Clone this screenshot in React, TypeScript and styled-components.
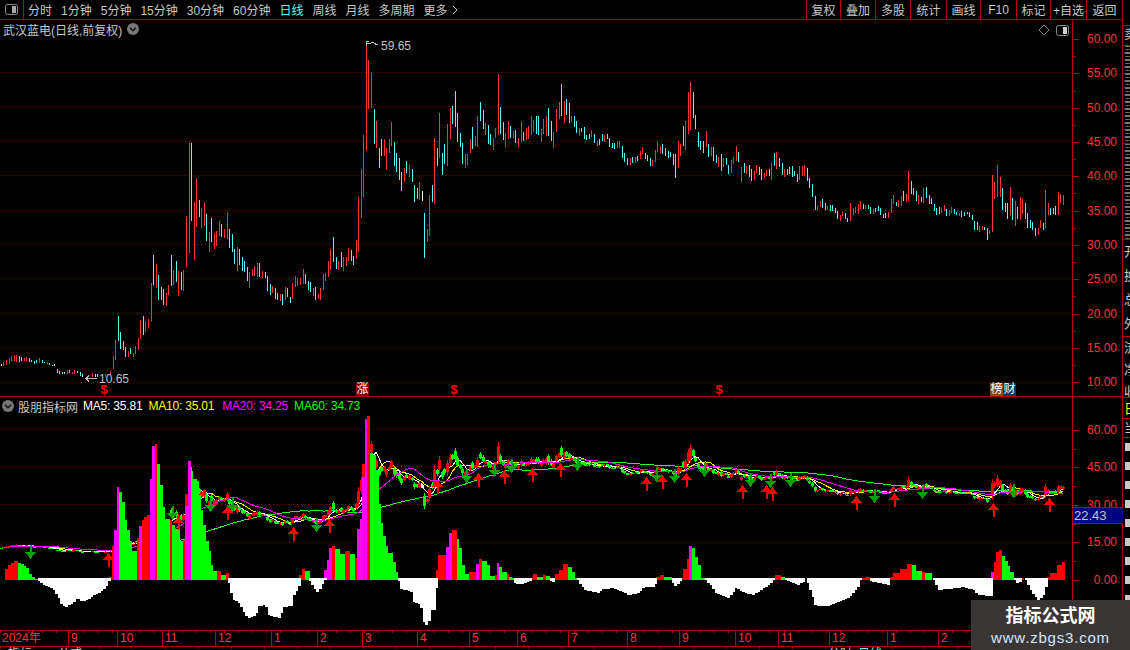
import React from "react";
import styled, { createGlobalStyle } from "styled-components";

const RED_LINE = "#b40000";
const AXIS_RED = "#ff3232";
const FONT = '"Liberation Sans", "Noto Sans CJK SC", sans-serif';

const Global = createGlobalStyle`
  html, body { margin: 0; padding: 0; background: #000; overflow: hidden; }
  * { box-sizing: border-box; }
`;

const Page = styled.div`
  position: relative;
  width: 1130px;
  height: 650px;
  overflow: hidden;
  background: #000;
  color: #c8c8c8;
  font: 12px ${FONT};
  display: flex;
  flex-direction: column;
`;

/* ---------- toolbar ---------- */
const Toolbar = styled.div`
  flex: 0 0 20px;
  width: 1123px;
  height: 20px;
  display: flex;
  align-items: stretch;
  border-bottom: 1px solid ${RED_LINE};
  border-right: 1px solid ${RED_LINE};
`;
const ToggleCell = styled.div`
  flex: 0 0 24px;
  display: flex;
  align-items: center;
  justify-content: center;
  border-right: 1px solid ${RED_LINE};
`;
const PeriodList = styled.div`
  flex: 1;
  display: flex;
  align-items: center;
  gap: 9px;
  padding-left: 4px;
`;
const PeriodItem = styled.span<{ $active?: boolean }>`
  color: ${(p) => (p.$active ? "#54ffff" : "#c8c8c8")};
  white-space: nowrap;
  display: inline-flex;
  align-items: center;
  gap: 4px;
`;
const ToolButtons = styled.div`
  display: flex;
`;
const ToolButton = styled.div<{ $wide?: number }>`
  width: ${(p) => p.$wide ?? 35}px;
  display: flex;
  align-items: center;
  justify-content: center;
  border-left: 1px solid ${RED_LINE};
  color: #c8c8c8;
  white-space: nowrap;
`;

/* ---------- body ---------- */
const Body = styled.div`
  flex: 1;
  display: flex;
  min-height: 0;
`;
const ChartStack = styled.div`
  flex: 0 0 1123px;
  display: flex;
  flex-direction: column;
  min-height: 0;
`;
const Pane = styled.div<{ $h: number; $top?: boolean }>`
  position: relative;
  flex: 0 0 ${(p) => p.$h}px;
  min-height: 0;
  height: ${(p) => p.$h}px;
  display: flex;
  border-top: ${(p) => (p.$top ? `1px solid ${RED_LINE}` : "none")};
`;
const Canvas = styled.svg`
  flex: 0 0 1072px;
  display: block;
  shape-rendering: crispEdges;
`;
const PriceAxis = styled.div<{ $pad: number }>`
  flex: 1;
  min-height: 0;
  border-left: 1px solid ${RED_LINE};
  border-right: 1px solid ${RED_LINE};
  padding-top: ${(p) => p.$pad}px;
  display: flex;
  flex-direction: column;
  overflow: hidden;
`;
const AxisRow = styled.div<{ $h: number; $minor?: boolean }>`
  position: relative;
  flex: 0 0 ${(p) => p.$h}px;
  display: flex;
  align-items: center;
  justify-content: flex-end;
  padding-right: 5px;
  color: ${AXIS_RED};
  &::before {
    content: "";
    position: absolute;
    left: 0;
    top: 50%;
    width: 6px;
    height: 1px;
    background: ${RED_LINE};
  }
  &::after {
    content: "";
    display: ${(p) => (p.$minor ? "block" : "none")};
    position: absolute;
    left: 0;
    top: 100%;
    width: 3px;
    height: 1px;
    background: ${RED_LINE};
  }
`;
const PaneTitle = styled.div`
  position: absolute;
  left: 3px;
  top: 1px;
  height: 16px;
  display: flex;
  align-items: center;
  gap: 5px;
  color: #c8c8c8;
`;
const CornerIcons = styled.div`
  position: absolute;
  left: 1038px;
  top: 4px;
  display: flex;
  align-items: center;
  gap: 6px;
`;
const Legend = styled.div`
  position: absolute;
  left: 2px;
  top: 1px;
  height: 16px;
  display: flex;
  align-items: center;
`;
const LegendName = styled.span`
  margin: 0 5px 0 4px;
  color: #c8c8c8;
`;
const LegendValue = styled.span<{ $color: string; $gap: number }>`
  color: ${(p) => p.$color};
  margin-right: ${(p) => p.$gap}px;
  white-space: nowrap;
  letter-spacing: -0.2px;
`;
const Badge = styled.span<{ $x: number; $bg: string }>`
  position: absolute;
  left: ${(p) => p.$x}px;
  top: 363px;
  width: 13px;
  height: 13px;
  background: ${(p) => p.$bg};
  color: #fff;
  font-size: 12px;
  line-height: 13px;
  text-align: center;
`;
const PriceTag = styled.div`
  position: absolute;
  left: 1073px;
  top: 110px;
  width: 50px;
  height: 17px;
  padding-left: 1px;
  background: #000080;
  border-top: 1px solid ${RED_LINE};
  border-bottom: 1px solid ${RED_LINE};
  color: #c8c8c8;
  font-size: 13px;
  line-height: 15px;
`;

/* ---------- time axis ---------- */
const TimeAxis = styled.div`
  flex: 0 0 16px;
  display: flex;
  border-top: 1px solid ${RED_LINE};
  border-bottom: 1px solid ${RED_LINE};
  background: repeating-linear-gradient(90deg, ${RED_LINE} 0 1px, transparent 1px 14px) top left / 100% 2px no-repeat;
`;
const TimeCell = styled.div<{ $w: number }>`
  flex: 0 0 ${(p) => p.$w}px;
  border-left: 1px solid ${RED_LINE};
  padding-left: 2px;
  color: ${AXIS_RED};
  line-height: 15px;
  white-space: nowrap;
  &:first-child { border-left: none; padding-left: 2px; }
`;
const TabStrip = styled.div`
  flex: 1;
  min-height: 0;
  overflow: hidden;
  display: flex;
  gap: 6px;
  padding-left: 8px;
  font-size: 12px;
  line-height: 14px;
  background: repeating-linear-gradient(90deg, ${RED_LINE} 0 1px, transparent 1px 33px) top left / 100% 2px no-repeat;
`;
const TabText = styled.span<{ $left?: number; $cyan?: boolean }>`
  margin-left: ${(p) => p.$left ?? 0}px;
  color: ${(p) => (p.$cyan ? "#54ffff" : "#c8c8c8")};
`;

/* ---------- clipped side panel ---------- */
const SidePanel = styled.div`
  flex: 1;
  overflow: hidden;
  padding-top: 5px;
  display: flex;
  flex-direction: column;
`;
const SideSection = styled.div<{ $h: number; $line: number; $size: number; $color?: string }>`
  flex: 0 0 ${(p) => p.$h}px;
  overflow: hidden;
  border-top: 1px solid ${RED_LINE};
  padding-left: 1px;
  color: ${(p) => p.$color ?? "#c8c8c8"};
  font-size: ${(p) => p.$size}px;
  line-height: ${(p) => p.$line}px;
  white-space: nowrap;
`;
const SideBlocks = styled.div`
  display: flex;
  flex-direction: column;
  gap: 11px;
  padding: 5px 0 0 1px;
`;
const SideBlock = styled.div`
  width: 5px;
  height: 8px;
  background: #c8c8c8;
`;
const SideLine = styled.div``;

/* ---------- watermark ---------- */
const Watermark = styled.div`
  position: absolute;
  right: 0;
  bottom: 0;
  width: 159px;
  height: 50px;
  background: #3b3636;
  display: flex;
  flex-direction: column;
  align-items: center;
  padding-top: 5px;
`;
const WatermarkTitle = styled.div`
  color: #fff;
  font-size: 18px;
  font-weight: 700;
  line-height: 22px;
`;
const WatermarkUrl = styled.div`
  color: #d6e6f8;
  font-size: 15px;
  line-height: 20px;
  letter-spacing: 0.8px;
  margin-top: 1px;
`;

/* ---------- data ---------- */
type Bar = { x: number; t: number; b: number; c: string };
const seg = (ox: number, oy: number, s: string): Bar[] =>
  s
    .split(";")
    .map((i) => i.trim())
    .filter(Boolean)
    .map((i) => {
      const [z, t, b, c] = i.split(" ");
      return { x: Math.floor(ox + +z / 3), t: oy + +t / 3, b: oy + +b / 3, c };
    });

const bars: Bar[] = [
  ...seg(0, 130, `4 702 708 c;11 697 707 r;18 690 705 r;27 684 702 r;33 679 692 r;42 676 692 r;48 675 695 r;57 678 695 c;63 680 694 c;72 684 692 r;78 681 693 r;87 684 696 c;93 690 697 c;102 692 702 c;108 690 700 c;117 684 699 r;126 690 700 c;132 695 700 c;141 696 703 r;147 699 705 c;156 704 708 c;162 702 708 w;171 717 729 c;177 722 732 c;186 725 732 c;192 726 732 c;201 720 732 r;207 720 730 c;216 725 732 r;222 720 732 r;231 722 730 c;240 727 738 c;246 732 741 c;276 729 741 r;286 732 740 c;291 732 742 c;315 733 741 r;330 722 735 r;339 678 717 r;346 630 690 r;354 558 632 c;360 606 658 c;369 633 660 c;375 651 681 c;384 663 681 r;390 654 672 c;399 669 681 r;405 648 672 r;414 624 660 r;420 570 627 r;430 558 615 c;435 573 606 r;444 567 594 r;453 459 573 r;459 375 465 c;468 402 474 r;474 435 510 c;483 471 510 c;489 477 525 c;498 489 528 r;504 465 495 r;513 375 468 c;519 420 465 r;528 393 456 c;534 423 498 r;543 426 480 c;549 420 483 r;558 258 411 r;567 39 369 r;573 39 273 c;582 216 390 r;588 144 291 r;597 210 261 c;603 234 294 r;612 216 288 r;618 252 333 c;627 306 366 r;633 264 336 c;642 309 357 r;648 303 348 r;657 273 318 r;663 282 321 c;672 297 324 r;682 246 327 r;687 297 354 c;696 312 366 c;702 357 402 c;711 351 423 r;717 357 405 c;726 381 423 c;732 393 426 c;741 411 453 c;747 426 474 r;756 417 438 r;762 408 438 r;771 399 441 r;777 399 441 c;786 423 444 r;795 426 444 c;801 438 483 c;810 462 495 c;816 468 489 r;825 474 507 c;831 489 510 c;840 492 513 r;846 492 525 c;855 471 510 r;861 474 501 c;870 501 519 c;876 459 507 r;885 438 471 r;891 444 468 r;900 444 465 r;909 417 462 r;915 432 462 c;924 453 480 c;930 456 486 c;939 474 498 r;945 471 510 c;954 492 507 r;960 474 510 r;969 432 480 r;975 429 453 r;984 393 441 r;990 357 420 r;999 321 396 c;1008 381 417 c;1014 393 420 r;1023 366 411 c;1029 381 423 r;1038 381 408 r;1044 354 393 r;1053 360 393 c;1059 378 405 c;1068 330 387 r;1075 201 366 r;1083 117 264 r;1090 15 201 r`),
  ...seg(340, 30, `78 40 363 r;84 90 237 r;93 126 234 r;102 237 342 c;108 273 354 r;117 354 414 c;123 327 378 c;132 327 378 r;138 354 420 r;147 327 369 r;153 276 348 r;162 336 408 c;168 369 426 c;177 384 450 c;183 426 483 c;192 414 456 r;198 393 429 c;207 405 441 r;216 417 456 c;222 465 516 c;231 474 507 c;237 456 510 r;246 483 513 w;252 549 684 c;261 597 636 r;267 495 618 r;276 465 516 c;282 324 522 r;291 354 408 c;297 249 384 r;306 369 435 c;312 342 402 c;321 282 408 r;330 234 327 r;336 228 282 c;345 183 291 c;351 249 336 c;360 309 351 c;366 339 402 c;375 372 414 r;381 372 405 r;390 327 369 r;396 291 357 c;405 318 348 r;411 258 351 r;420 216 273 c;429 240 297 c;435 279 315 r;444 285 342 c;450 312 345 c;459 324 360 r;465 294 324 r;474 132 315 r;480 231 312 c;489 276 330 c;495 309 351 r;504 273 327 r;510 288 324 c;519 303 324 r;525 300 339 c;534 324 351 r;543 273 336 r;549 306 333 c;558 294 330 r;564 288 327 r;573 258 315 r;579 270 306 r;588 258 312 c;594 258 315 c;603 297 336 r;609 267 312 r;618 258 318 r;624 234 318 c;633 273 333 c;639 306 354 r;648 237 306 r;657 216 267 r;663 162 258 c;672 213 279 r;678 207 255 c;687 219 279 c;693 258 276 r;702 258 291 c;708 273 309 c;717 294 318 r;723 294 306 c;732 291 327 c;738 315 330 c;747 312 327 c;753 300 321 r;762 312 339 c;771 333 348 r;777 327 345 c;786 312 333 c;792 315 336 r;801 312 327 c;807 324 351 c;816 339 354 c;822 339 357 c;831 333 354 r;837 333 354 r;846 348 384 c;852 369 396 c;861 384 405 c;870 384 405 r;876 381 399 c;885 381 399 r;891 378 393 c;900 363 387 r;906 351 372 r;915 369 387 c;921 375 393 c;930 384 408 c;936 390 408 r;945 360 396 r;951 333 366 r;960 348 369 r;966 342 372 c;975 354 378 c;984 363 384 c;990 366 381 c;999 372 405 c;1006 372 444 c;1014 333 414 r;1020 342 378 r;1029 288 348 c;1035 273 360 r;1044 186 312 r;1050 156 300 r;1059 186 264 c;1065 255 297 c;1075 306 351 c;1080 333 360 c;1089 333 369 c;1098 303 351 r;1104 342 381 c;1113 351 378 r;1119 351 393 c;1128 375 399 c;1134 381 411 r`),
  ...seg(700, 70, `63 252 303 c;69 264 291 r;78 264 285 c;84 285 312 c;93 270 309 r;99 261 282 r;108 228 273 r;114 246 276 c;123 291 336 r;132 279 309 c;138 288 312 r;147 285 321 c;153 297 333 c;162 303 330 r;168 285 309 r;177 291 315 c;183 297 330 c;192 309 324 r;198 300 318 r;207 297 318 c;213 279 330 r;222 249 288 c;228 246 297 r;237 264 291 c;246 279 315 c;252 297 321 r;261 297 315 c;267 291 312 c;276 288 321 c;282 303 318 c;291 312 336 c;297 288 330 r;306 288 318 r;312 285 318 r;321 294 333 c;327 324 354 c;336 342 381 c;345 378 420 c;351 408 420 r;360 393 411 r;366 387 414 c;375 399 420 c;381 408 420 r;390 405 423 c;396 405 423 c;405 414 429 c;411 423 447 c;420 435 453 r;426 423 438 r;435 429 447 c;441 444 456 c;450 399 453 r;459 414 435 r;465 411 429 r;474 402 432 r;480 393 417 r;489 402 417 c;495 405 417 r;504 405 417 c;510 411 432 c;519 417 432 r;525 414 426 c;534 408 423 c;540 414 435 c;549 432 444 c;555 429 444 c;564 426 444 r;573 387 429 r;579 375 402 r;588 396 408 c;594 390 411 r;603 378 408 r;609 363 393 c;618 372 396 r;624 303 393 r;633 333 372 c;639 354 375 c;648 363 393 c;654 375 402 r;663 381 396 c;669 354 399 r;678 351 384 c;687 375 402 c;693 384 402 c;702 402 423 c;708 414 435 c;717 411 432 c;723 414 429 r;732 405 423 r;738 417 438 c;747 420 438 r;753 411 429 r;762 417 432 c;768 426 435 c;777 429 438 r;783 423 441 c;792 426 438 c;801 426 432 c;807 426 441 c;816 435 450 c;822 453 480 c;831 456 480 c;837 468 486 r;846 468 480 r;852 471 480 c;861 474 510 c;867 480 492 r;876 315 486 r;882 336 387 r;891 285 381 r;900 321 381 r;906 354 420 c;915 399 426 c;921 399 447 c;930 351 438 r;936 384 450 c;945 393 468 r;951 411 447 c;960 381 450 r;966 387 432 r;975 399 447 c;981 429 474 c;990 450 474 c;996 456 480 c;1005 474 498 c;1014 474 495 r;1020 450 474 r;1029 459 480 c;1035 360 474 r;1044 399 435 r;1050 414 435 c;1059 414 432 c;1065 408 435 c;1074 366 435 r;1080 372 399 r;1089 375 405 r`),
];

const toPrice = (y: number) => 60 - (y - 38.3) / 6.86;
const lowY = (y: number) => 579 - 2.5 * toPrice(y);

const ma = (n: number) => {
  const pts: string[] = [];
  bars.forEach((b, i) => {
    if (i < n - 1 && n === 60) return;
    const from = Math.max(0, i - n + 1);
    let sum = 0;
    for (let k = from; k <= i; k++) {
      const r = bars[k];
      sum += r.c === "c" ? r.t * 0.4 + r.b * 0.6 : r.t * 0.6 + r.b * 0.4;
    }
    pts.push(`${b.x},${lowY(sum / (i - from + 1)).toFixed(1)}`);
  });
  return pts.join(" ");
};

const HIST_COLOR: Record<string, string> = { r: "#ff0000", g: "#00ff00", m: "#ff00ff" };
const hist = `5 8 569 r;8 11 565 r;11 14 563 r;14 18 561 r;18 21 563 g;21 24 564 g;24 26 566 g;26 29 568 g;29 32 574 g;32 35 577 g;35 38 579 g;
109 112 577 r;112 114 546 r;114 117 530 m;117 119 487 m;119 122 492 g;122 125 502 g;125 127 520 g;127 130 530 g;130 132 541 g;132 137 551 g;137 139 538 r;139 142 526 m;142 144 520 r;144 147 517 r;147 150 515 r;150 152 479 m;152 155 446 m;155 157 444 r;157 160 464 g;160 163 485 g;163 165 507 g;165 170 519 g;170 172 520 r;172 175 525 g;175 180 529 g;180 183 541 g;183 185 540 r;185 188 494 r;185 188 506 m;188 191 461 m;191 193 471 g;193 197 479 g;197 199 481 g;199 201 495 g;201 203 510 g;203 206 525 g;206 209 541 g;209 211 551 g;211 213 565 g;213 217 571 g;217 221 571 r;221 226 575 g;226 229 573 r;
299 302 575 r;302 305 569 r;305 310 571 g;324 327 570 m;327 329 560 m;329 332 548 m;332 335 546 r;335 340 549 g;340 345 554 g;345 350 551 r;350 355 554 g;355 357 558 r;357 360 529 m;360 362 519 m;362 365 464 r;362 365 477 m;365 368 419 m;367 370 416 r;370 373 453 g;373 376 455 g;376 379 470 g;379 381 504 g;381 383 523 g;383 386 536 g;386 388 546 g;388 393 553 g;393 396 562 g;396 398 572 g;
436 438 570 r;438 446 555 r;446 449 547 m;449 452 533 m;452 457 530 r;457 459 539 g;459 462 548 g;462 465 565 g;465 469 574 g;469 476 572 r;476 479 564 m;479 482 559 r;482 487 561 g;487 490 565 g;490 495 576 g;495 497 575 r;497 499 563 m;499 502 567 g;502 507 572 g;507 509 574 r;509 512 577 g;512 515 578 g;
530 533 578 r;533 537 574 r;537 543 577 g;543 546 575 r;546 550 576 g;555 559 574 r;559 563 570 r;563 568 564 r;568 572 567 g;572 575 572 g;575 577 578 g;
656 660 577 r;660 664 575 r;664 672 577 g;680 683 578 r;683 687 569 r;687 689 559 r;689 692 546 m;692 695 548 g;695 698 557 g;698 701 565 g;701 705 578 g;
775 781 575 r;781 785 577 g;860 865 578 r;865 870 577 r;890 893 577 r;893 900 573 r;900 907 569 r;907 912 564 r;912 916 565 g;916 922 571 g;922 925 572 r;925 932 573 g;
991 994 572 m;994 996 562 r;996 999 552 r;999 1002 550 r;1002 1005 556 g;1005 1008 561 g;1008 1010 566 g;1010 1014 572 g;1021 1024 578 r;1047 1050 577 r;1050 1057 573 r;1057 1062 565 r;1062 1065 562 r`
  .split(";")
  .map((s) => s.trim().split(" "))
  .map(([a, b, y, c]) => ({ x0: +a, x1: +b, y: +y, c }));

const whiteRuns: number[][] = [
  [38,581,43,585,47,587,52,589,57,596,60,603,62,606,65,607,68,605,72,603,76,598,81,601,87,600,92,595,98,593,104,588,107,583,109,579],
  [228,583,232,599,238,603,242,610,247,618,255,615,257,606,265,605,268,615,278,618,283,607,292,606,293,595,297,589,300,579],
  [309,581,313,588,317,593,322,583,325,579],
  [398,581,400,589,412,592,413,602,420,605,423,622,427,627,430,610,434,610,436,580],
  [514,583,518,584,525,583,530,580],
  [550,581,555,582],
  [577,580,580,585,585,590,597,593,602,589,613,588,622,592,628,595,638,593,643,587,652,587,657,580],
  [672,583,675,587,680,580],
  [705,580,710,585,715,593,728,598,735,588,743,592,752,595,760,590,770,583,773,579],
  [785,580,797,585,805,580],
  [807,583,815,606,827,606,848,598,857,587,860,579],
  [870,581,888,585,890,579],
  [933,580,938,590,963,587,973,590,977,595,991,596],
  [1014,580,1018,584,1021,579],
  [1025,580,1030,590,1037,600,1043,595,1047,579],
];
const whiteRects = whiteRuns.flatMap((run) => {
  const out: { x: number; w: number; y: number }[] = [];
  const pts: number[][] = [];
  for (let i = 0; i < run.length; i += 2) pts.push([run[i], run[i + 1]]);
  let k = 0;
  for (let x = pts[0][0]; x < pts[pts.length - 1][0]; x += 2.5) {
    while (k < pts.length - 2 && x >= pts[k + 1][0]) k++;
    const [x0, y0] = pts[k];
    const [x1, y1] = pts[k + 1];
    out.push({ x: Math.floor(x), w: 3, y: Math.round(y0 + ((y1 - y0) * (x - x0)) / (x1 - x0)) });
  }
  return out;
});

const upArrows = [[108,553],[178,516],[227,506],[293,527],[329,519],[437,480],[478,473],[504,470],[532,468],[560,463],[646,477],[662,475],[686,473],[742,485],[766,485],[772,487],[856,496],[894,493],[993,503],[1049,498]];
const downArrows = [[30,559],[172,520],[210,512],[232,512],[316,532],[466,483],[494,477],[511,473],[577,471],[656,482],[674,483],[704,477],[750,487],[770,488],[790,487],[874,503],[922,499],[1013,498]];

const upperPrices = ["60.00","55.00","50.00","45.00","40.00","35.00","30.00","25.00","20.00","15.00","10.00"];
const lowerPrices = ["60.00","45.00","30.00","15.00","0.00"];
const periods = ["分时","1分钟","5分钟","15分钟","30分钟","60分钟","日线","周线","月线","多周期"];
const tools: [string, number?][] = [["复权",34],["叠加"],["多股"],["统计",36],["画线",34],["F10",36],["标记",34],["+自选",36],["返回",36]];
const months: [string, number][] = [["2024年",68],["9",117],["10",162],["11",215],["12",271],["1",317],["2",362],["3",417],["4",469],["5",517],["6",568],["7",627],["8",679],["9",735],["10",778],["11",829],["12",887],["1",938],["2",1123]];

/* ---------- icons ---------- */
const Toggle = ({ light }: { light?: boolean }) => (
  <svg width="13" height="11" viewBox="0 0 13 11">
    <rect x="0.5" y="0.5" width="12" height="10" rx="2" fill="#000" stroke="#8a8a8a" />
    <rect x="7" y="2" width="4" height="7" fill={light ? "#d0d0d0" : "#a8a8a8"} />
  </svg>
);
const Round = () => (
  <svg width="12" height="12" viewBox="0 0 12 12">
    <circle cx="6" cy="6" r="6" fill="#777" />
    <path d="M3 4.8 6 7.8 9 4.8" fill="none" stroke="#111" strokeWidth="1.4" />
  </svg>
);

const Dots = ({ ys }: { ys: number[] }) => (
  <>
    {ys.map((y) => (
      <line key={y} x1="1" x2="1072" y1={y + 0.5} y2={y + 0.5} stroke="#a80000" strokeDasharray="1 3" />
    ))}
  </>
);

export default function App() {
  return (
    <Page>
      <Global />
      <Toolbar>
        <ToggleCell>
          <Toggle />
        </ToggleCell>
        <PeriodList>
          {periods.map((p) => (
            <PeriodItem key={p} $active={p === "日线"}>
              {p}
            </PeriodItem>
          ))}
          <PeriodItem>
            更多
            <svg width="6" height="10" viewBox="0 0 6 10">
              <path d="M1 1 5 5 1 9" fill="none" stroke="#c8c8c8" />
            </svg>
          </PeriodItem>
        </PeriodList>
        <ToolButtons>
          {tools.map(([t, w]) => (
            <ToolButton key={t} $wide={w}>
              {t}
            </ToolButton>
          ))}
        </ToolButtons>
      </Toolbar>

      <Body>
        <ChartStack>
          <Pane $h={376}>
            <Canvas width="1072" height="376" viewBox="0 20 1072 376">
              <Dots ys={[72, 106, 141, 175, 210, 244, 278, 313, 347, 382]} />
              {bars.map((b, i) => (
                <rect
                  key={i}
                  x={b.x}
                  y={b.t}
                  width="1"
                  height={b.b - b.t}
                  fill={b.c === "r" ? "#ff3232" : b.c === "w" ? "#ffffff" : "#54fcfc"}
                />
              ))}
              <g fill="none" stroke="#c0c0c0">
                <path d="M369 41.5H366.5V46M367 43.5H370L373 42L376 44.5H378" />
                <path d="M97 378.5H86M89 375.5L86 378.5L89 381.5" />
              </g>
              <text x="381" y="50" fill="#c0c0c0" fontFamily="Liberation Sans" fontSize="12">59.65</text>
              <text x="99" y="383" fill="#c0c0c0" fontFamily="Liberation Sans" fontSize="12">10.65</text>
              {[104, 454, 719].map((x) => (
                <text key={x} x={x} y="394" textAnchor="middle" fill="#ff0000" fontFamily="Liberation Sans" fontWeight="700" fontSize="13">
                  $
                </text>
              ))}
            </Canvas>
            <PriceAxis $pad={2}>
              {upperPrices.map((p, i) => (
                <AxisRow key={p} $h={34.3} $minor={i < 10}>
                  {p}
                </AxisRow>
              ))}
            </PriceAxis>
            <PaneTitle>
              武汉蓝电(日线,前复权)
              <Round />
            </PaneTitle>
            <CornerIcons>
              <svg width="12" height="12" viewBox="0 0 12 12">
                <path d="M6 1 11 6 6 11 1 6Z" fill="none" stroke="#808080" />
              </svg>
              <Toggle light />
            </CornerIcons>
            <Badge $x={356} $bg="#8a0000">涨</Badge>
            <Badge $x={990} $bg="#8a4a00">榜</Badge>
            <Badge $x={1003} $bg="#003a70">财</Badge>
          </Pane>

          <Pane $h={234} $top>
            <Canvas width="1072" height="233" viewBox="0 397 1072 233">
              <Dots ys={[429, 466, 504, 542]} />
              <polyline points={ma(60)} fill="none" stroke="#22ff22" />
              <polyline points={ma(10)} fill="none" stroke="#ffff00" />
              <polyline points={ma(5)} fill="none" stroke="#ffffff" />
              {bars.map((b, i) => {
                const t = lowY(b.t);
                const h = Math.max(1, lowY(b.b) - t);
                const fill = b.c === "r" ? "#ff0000" : b.c === "w" ? "#ffffff" : "#00ff00";
                return (
                  <g key={i} fill={fill}>
                    <rect x={b.x} y={t} width="1" height={h} />
                    <rect x={b.x - 1} y={t + h * 0.2} width="3" height={Math.max(1, h * 0.6)} />
                  </g>
                );
              })}
              <polyline points={ma(20)} fill="none" stroke="#ff00ff" />
              {hist.map((h, i) => (
                <rect key={i} x={h.x0} y={h.y} width={h.x1 - h.x0} height={580 - h.y} fill={HIST_COLOR[h.c]} />
              ))}
              {whiteRects.map((r, i) => (
                <rect key={i} x={r.x} y={578} width={r.w} height={Math.max(1, r.y - 578)} fill="#ffffff" />
              ))}
              {upArrows.map(([x, y]) => (
                <g key={`${x}u`} fill="#ff0000">
                  <path d={`M${x + 0.5} ${y}L${x + 6} ${y + 7}H${x - 5}Z`} />
                  <rect x={x - 0.5} y={y + 7} width="2" height="7" />
                </g>
              ))}
              {downArrows.map(([x, y]) => (
                <g key={`${x}d`} fill="#00a000">
                  <path d={`M${x + 0.5} ${y}L${x + 6} ${y - 7}H${x - 5}Z`} />
                  <rect x={x - 0.5} y={y - 14} width="2" height="7" />
                </g>
              ))}
            </Canvas>
            <PriceAxis $pad={14}>
              {lowerPrices.map((p, i) => (
                <AxisRow key={p} $h={37.5} $minor={i < 4}>
                  {p}
                </AxisRow>
              ))}
            </PriceAxis>
            <Legend>
              <Round />
              <LegendName>股朋指标网</LegendName>
              <LegendValue $color="#ffffff" $gap={6}>MA5: 35.81</LegendValue>
              <LegendValue $color="#ffff00" $gap={8}>MA10: 35.01</LegendValue>
              <LegendValue $color="#ff00ff" $gap={6}>MA20: 34.25</LegendValue>
              <LegendValue $color="#00ff00" $gap={6}>MA60: 34.73</LegendValue>
            </Legend>
            <PriceTag>22.43</PriceTag>
          </Pane>

          <TimeAxis>
            {months.map(([m, end], i) => (
              <TimeCell key={i} $w={end - (i ? months[i - 1][1] : 0)}>
                {m}
              </TimeCell>
            ))}
          </TimeAxis>
          <TabStrip>
            <TabText>指标</TabText>
            <TabText $left={20}>公式</TabText>
            <TabText $left={740}>分时</TabText>
            <TabText $cyan>日线</TabText>
          </TabStrip>
        </ChartStack>

        <SidePanel>
          <SideSection $h={20} $line={18} $size={12}><SideLine>卖</SideLine></SideSection>
          <SideSection $h={98} $line={7} $size={7}>{Array.from({ length: 14 }, (_, i) => <SideLine key={i}>三</SideLine>)}</SideSection>
          <SideSection $h={96} $line={7} $size={7}>{Array.from({ length: 14 }, (_, i) => <SideLine key={i}>三</SideLine>)}</SideSection>
          <SideSection $h={97} $line={24} $size={13}><SideLine>开</SideLine><SideLine>换</SideLine><SideLine>总</SideLine><SideLine>外</SideLine></SideSection>
          <SideSection $h={61} $line={22} $size={13}><SideLine>流</SideLine><SideLine>净</SideLine><SideLine>收</SideLine></SideSection>
          <SideSection $h={21} $line={21} $size={13} $color="#ffff00"><SideLine>日</SideLine></SideSection>
          <SideSection $h={19} $line={18} $size={13}><SideLine>当</SideLine></SideSection>
          <SideSection $h={213} $line={18} $size={12}>
            <SideBlocks>
              {Array.from({ length: 10 }, (_, i) => <SideBlock key={i} />)}
            </SideBlocks>
          </SideSection>
        </SidePanel>
      </Body>

      <Watermark>
        <WatermarkTitle>指标公式网</WatermarkTitle>
        <WatermarkUrl>www.zbgs3.com</WatermarkUrl>
      </Watermark>
    </Page>
  );
}
